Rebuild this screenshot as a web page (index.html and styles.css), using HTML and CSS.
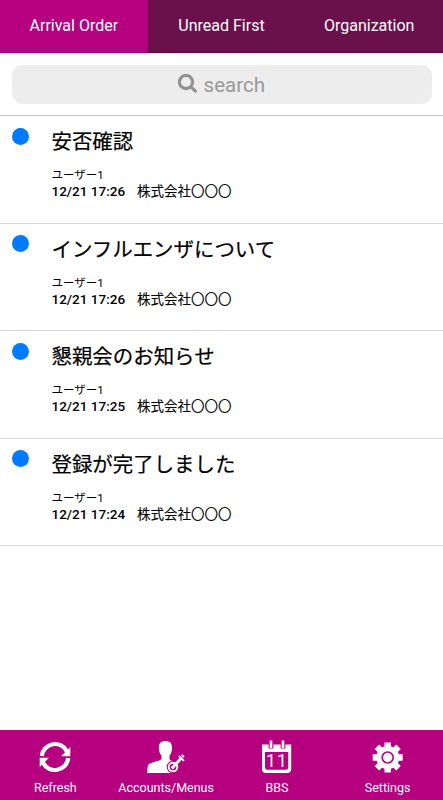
FILE: index.html
```html
<!DOCTYPE html>
<html lang="ja">
<head>
<meta charset="utf-8">
<title>Messages</title>
<link rel="stylesheet" href="styles.css">
</head>
<body>
<nav class="tabs">
  <div class="tab active">Arrival Order</div>
  <div class="tab">Unread First</div>
  <div class="tab">Organization</div>
</nav>
<div class="search-bar">
  <div class="search">
    <svg class="magnifier" viewBox="0 0 20 20"><circle cx="8" cy="8" r="6.6"/><path d="M12.7 12.7L18.4 18.2"/></svg>
    <span>search</span>
  </div>
</div>
<main class="list">
  <article class="row"><i class="dot"></i><div class="content"><h2>安否確認</h2><p class="user">ユーザー1</p><p class="meta"><time>12/21 17:26</time><span>株式会社〇〇〇</span></p></div></article>
  <article class="row"><i class="dot"></i><div class="content"><h2>インフルエンザについて</h2><p class="user">ユーザー1</p><p class="meta"><time>12/21 17:26</time><span>株式会社〇〇〇</span></p></div></article>
  <article class="row"><i class="dot"></i><div class="content"><h2>懇親会のお知らせ</h2><p class="user">ユーザー1</p><p class="meta"><time>12/21 17:25</time><span>株式会社〇〇〇</span></p></div></article>
  <article class="row"><i class="dot"></i><div class="content"><h2>登録が完了しました</h2><p class="user">ユーザー1</p><p class="meta"><time>12/21 17:24</time><span>株式会社〇〇〇</span></p></div></article>
</main>
<footer class="toolbar">
  <div class="tool">
    <svg viewBox="0 0 40 36"><g fill="none" stroke="#fff" stroke-width="4.2"><path d="M6.800 17A13.300 13.300 0 0 1 32 12.500"/><path d="M33.200 19A13.300 13.300 0 0 1 8 23.500"/></g><path fill="#fff" d="M35.300 8v9.200H26zM4.700 28v-9.200H14z"/></svg>
    <span>Refresh</span>
  </div>
  <div class="tool">
    <svg viewBox="0 0 40 36"><path fill="#fff" d="M19.300 2C14.500 2 12.600 5 12.800 9C13 12.500 14 15 15.500 16.800V20C13.500 22.500 5 23 2.500 25.500Q1.200 27.500 1.200 34H32V25L26 22Q23.500 21 23.500 19.500V16.800C25.200 14.500 26 12 26 9C26 4.500 24 2 19.300 2z"/><path d="M29 26L38 16" stroke="#b5007f" stroke-width="6"/><circle cx="27" cy="28" r="6.300" fill="#b5007f"/><path fill="#b5007f" d="M29 28h6v7h-6z"/><circle cx="27" cy="28" r="4.300" fill="#b5007f" stroke="#fff" stroke-width="1.900"/><path d="M25.800 29.500L36 18.200" fill="none" stroke="#fff" stroke-width="3"/><path d="M32.800 17.200l5.200 4.600M35.600 15.800l2.400 2.200" fill="none" stroke="#fff" stroke-width="1.800"/></svg>
    <span>Accounts/Menus</span>
  </div>
  <div class="tool">
    <svg viewBox="0 0 40 36"><path fill="#fff" fill-rule="evenodd" d="M5 5.500H34.200V30Q34.200 34 30.300 34H8.900Q5 34 5 30zM8 13V28.500Q8 30.800 10 30.800H29Q31.200 30.800 31.200 28.500V13z"/><path d="M14 2v7.500M26 2v7.500" stroke="#b5007f" stroke-width="4.800"/><path d="M14 1.500v7.500M26 1.500v7.500" stroke="#fff" stroke-width="2.600"/><text class="day" x="14" y="28">1</text><text class="day" x="25" y="28">1</text></svg>
    <span>BBS</span>
  </div>
  <div class="tool">
    <svg viewBox="0 0 40 36"><g fill="#fff"><circle cx="19.700" cy="18.500" r="11.600"/><path d="M16.500 3.500h6.400v30h-6.400zM4.700 15.300h30v6.400h-30z"/><path transform="rotate(45 19.700 18.500)" d="M16.500 3.200h6.400v30.600h-6.400zM4.400 15.300h30.600v6.400H4.400z"/></g><circle cx="19.700" cy="18.500" r="5.500" fill="#fff" stroke="#b5007f" stroke-width="1.600"/></svg>
    <span>Settings</span>
  </div>
</footer>
</body>
</html>
```
FILE: styles.css
```css
* { box-sizing: border-box; margin: 0; padding: 0; }
body {
  width: 443px; height: 800px; background: #fff; color: #000;
  font-family: Roboto, "Noto Sans CJK JP", sans-serif;
  display: flex; flex-direction: column; overflow: hidden;
}
.tabs { display: grid; grid-template-columns: repeat(3, 1fr); height: 53px; background: #6a114b; border-bottom: 1px solid #5b063e; }
.tab { color: #fff; font-size: 16px; line-height: 52px; text-align: center; }
.tab.active { background: #b5007f; height: 53px; }
.search-bar { height: 63px; padding: 11.500px 11.500px 0; border-bottom: 1px solid #c8c8c8; }
.search { height: 39px; border-radius: 11px; background: #ededed; color: #999; font-size: 20.500px; display: flex; align-items: center; justify-content: center; gap: 5.500px; }
.search span { padding-top: 2px; }
.magnifier { width: 20px; height: 20px; fill: none; stroke: #929292; stroke-width: 3.100; }
.list { flex: 1; }
.row { display: flex; height: 107.500px; border-bottom: 1px solid #d6d6d6; padding: 11.500px 11.500px 0; }
.dot { width: 17px; height: 17px; border-radius: 50%; background: #007aff; }
.content { margin-left: 23px; }
h2 { font-size: 20.450px; font-weight: 400; line-height: 28px; margin-top: .5px; -webkit-text-stroke: .2px #000; }
.user { font-size: 11.500px; line-height: 16px; margin-top: 11px; }
.meta { font-size: 13.500px; line-height: 18px; margin-top: -1px; display: flex; gap: 12px; font-weight: 500; }
.meta span { font-weight: 400; -webkit-text-stroke: .1px #000; }
.toolbar { height: 70px; background: #b5007f; display: grid; grid-template-columns: repeat(4, 1fr); }
.tool { display: flex; flex-direction: column; align-items: center; padding-top: 9px; color: #fff; font-size: 12.500px; line-height: 15px; }
.tool svg { width: 40px; height: 36px; }
.tool span { margin-top: 5px; }
.day { font: 400 17.500px Roboto, sans-serif; fill: #fff; text-anchor: middle; }
```
